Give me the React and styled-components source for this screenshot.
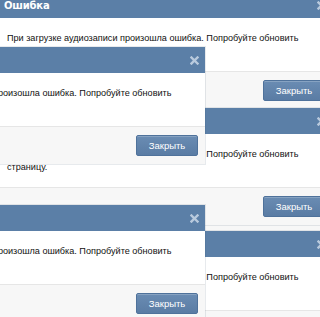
import React from "react";
import styled, { createGlobalStyle } from "styled-components";

const GlobalStyle = createGlobalStyle`
    html, body {
        margin: 0;
        padding: 0;
        background: #ffffff;
    }
    body {
        font-family: "Liberation Sans", Arial, sans-serif;
        font-size: 9px;
    }
`;

const MESSAGE =
    "При загрузке аудиозаписи произошла ошибка. Попробуйте обновить страницу.";

// each window of the cascade, as it sits on the screen
const windows = [
    { id: "a", left: -11, top: -8, z: 1 },
    { id: "c", left: -11, top: 108, z: 2 },
    { id: "e", left: -11, top: 231, z: 3 },
    { id: "b", left: -138, top: 47, z: 4 },
    { id: "d", left: -138, top: 205, z: 5 },
];

const App = () => {
    return (
        <>
            <GlobalStyle />
            <Desktop>
                {windows.map((w) => (
                    <ErrorBox key={w.id} $left={w.left} $top={w.top} $z={w.z} />
                ))}
            </Desktop>
        </>
    );
};

export default App;

export function ErrorBox({ $left, $top, $z }) {
    return (
        <Box $left={$left} $top={$top} $z={$z}>
            <Header>
                <Title>Ошибка</Title>
                <CloseIcon />
            </Header>
            <Body>{MESSAGE}</Body>
            <Footer>
                <Button>Закрыть</Button>
            </Footer>
        </Box>
    );
}

function CloseIcon() {
    return (
        <CloseWrap>
            <svg width="9" height="9" viewBox="0 0 9 9">
                <path
                    d="M1.5 1.5 L7.5 7.5 M7.5 1.5 L1.5 7.5"
                    stroke="#b9cadd"
                    strokeWidth="2.4"
                    strokeLinecap="square"
                />
            </svg>
        </CloseWrap>
    );
}

export const Desktop = styled.div`
    position: relative;
    width: 320px;
    height: 317px;
    overflow: hidden;
    background: #f7f7f7;
`;

export const Box = styled.div`
    position: absolute;
    left: ${(p) => p.$left}px;
    top: ${(p) => p.$top}px;
    z-index: ${(p) => p.$z};
    width: 343px;
    display: flex;
    flex-direction: column;
    background: #ffffff;
    box-shadow: 0 0 0 1px rgba(60, 80, 110, 0.12);
`;

export const Header = styled.div`
    height: 26px;
    display: flex;
    align-items: center;
    justify-content: space-between;
    padding: 0 5px 0 15px;
    background: #5b7fa7;
`;

export const Title = styled.span`
    color: #ffffff;
    font-family: "DejaVu Sans", sans-serif;
    font-weight: bold;
    font-size: 10px;
    letter-spacing: -0.2px;
`;

export const CloseWrap = styled.span`
    display: flex;
    width: 9px;
    height: 9px;
    margin-right: 1px;
`;

export const Body = styled.div`
    height: 53px;
    box-sizing: border-box;
    padding: 14px 18px 12px 18px;
    line-height: 13px;
    color: #111111;
    font-size: 9.1px;
`;

export const Footer = styled.div`
    height: 38px;
    box-sizing: border-box;
    display: flex;
    align-items: center;
    justify-content: flex-end;
    padding: 0 7px;
    background: #f7f7f7;
    border-top: 1px solid #e6e6e6;
`;

export const Button = styled.button`
    height: 21px;
    width: 62px;
    padding: 0;
    border: 1px solid #4f729b;
    border-radius: 2px;
    background: linear-gradient(#6a8cb3, #5a7ca4);
    color: #ffffff;
    font-family: "Liberation Sans", Arial, sans-serif;
    font-size: 9.5px;
    box-shadow: inset 0 1px 0 rgba(255, 255, 255, 0.2);
`;
